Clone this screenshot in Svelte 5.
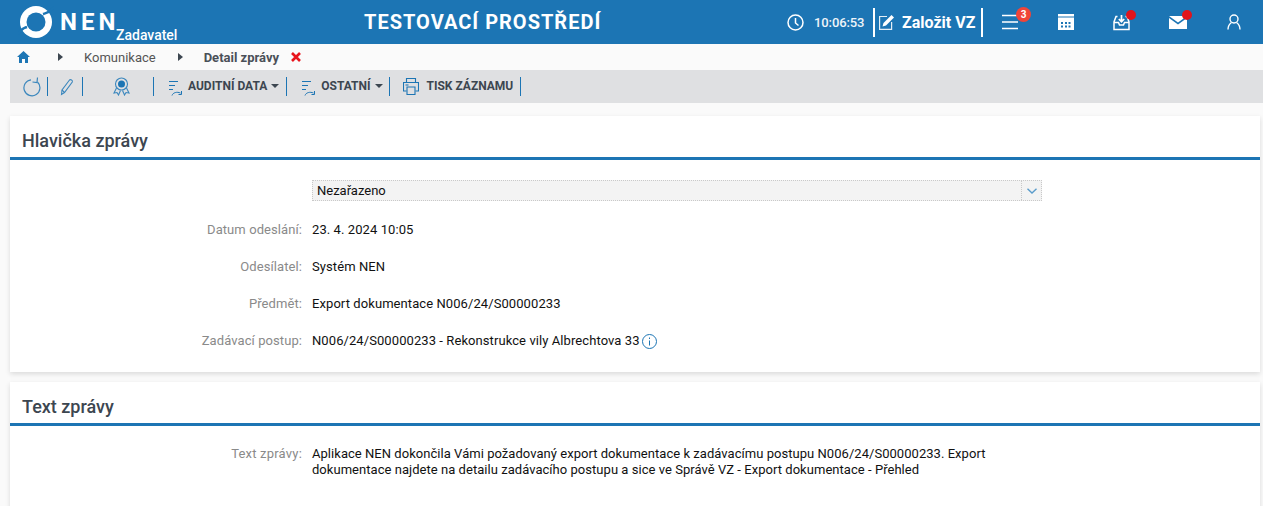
<script>
  const fields = [
    ['Datum odeslání:', '23. 4. 2024 10:05'],
    ['Odesílatel:', 'Systém NEN'],
    ['Předmět:', 'Export dokumentace N006/24/S00000233']
  ];
</script>

<div class="page">
  <header class="top">
    <div class="brand">
      <svg class="logo" width="36" height="36" viewBox="0 0 36 36">
        <circle cx="18" cy="18" r="16" fill="#fff"/>
        <circle cx="18" cy="18" r="9.500" fill="#1c75b4"/>
        <path d="M36 3C31 9 28 9 25 10" fill="none" stroke="#1c75b4" stroke-width="2.500"/>
        <path d="M0 30C4 24 6 24 9 23" fill="none" stroke="#1c75b4" stroke-width="2.500"/>
      </svg>
      <span class="nen">NEN</span>
      <span class="role">Zadavatel</span>
    </div>
    <div class="env">TESTOVACÍ PROSTŘEDÍ</div>
    <div class="tools">
      <svg class="clock" width="17" height="17" viewBox="0 0 17 17" fill="none" stroke="#fff" stroke-width="1.500"><circle cx="8.500" cy="8.500" r="7.500"/><path d="M8.500 4v5l3 2.500"/></svg>
      <span class="time">10:06:53</span>
      <div class="create">
        <svg width="16" height="16" viewBox="0 0 16 16" fill="none" stroke="#e3eef6" stroke-width="1.200"><path d="M8 2.500H.6v12.900h12V8"/><path d="M3.500 12.500l1-3.500L12.500 1l2.500 2.500-8 8z" fill="#fff" stroke="none"/></svg>
        <span>Založit VZ</span>
      </div>
      <div class="ico menu">
        <svg width="17" height="16" viewBox="0 0 17 16" fill="none" stroke="#fff" stroke-width="1.500"><path d="M0 1.500h16M0 8h16M0 14.500h16"/></svg>
        <span class="badge">3</span>
      </div>
      <div class="ico cal">
        <svg width="16" height="16" viewBox="0 0 16 16"><path fill="#fff" fill-rule="evenodd" d="M0 0h16v2.500H0zM0 3.500h16V16H0zM3 8v2h2V8zM7 8v2h2V8zM10.500 8v2h2V8zM3 11.500v2h2v-2zM7 11.500v2h2v-2zM10.500 11.500v2h2v-2z"/></svg>
      </div>
      <div class="ico tray">
        <svg width="17" height="17" viewBox="0 0 17 17" fill="none" stroke="#fff" stroke-width="1.500"><path d="M4.500 2.500H3L1 8v7.500h15V8l-2-5.500h-1.500"/><path d="M1 8.500h4.500l1 2.500h4l1-2.500H16"/><path d="M8.500 1v6.500M5.800 5l2.700 2.700L11.200 5" stroke-width="1.700"/></svg>
        <span class="dot"></span>
      </div>
      <div class="ico mail">
        <svg width="18" height="13" viewBox="0 0 18 13"><path fill="#fff" d="M0 0h18L9 6.500zM0 2l9 6.500L18 2v11H0z"/></svg>
        <span class="dot"></span>
      </div>
      <div class="ico user">
        <svg width="14" height="16" viewBox="0 0 14 16" fill="none" stroke="#fff" stroke-width="1.400"><circle cx="7" cy="5" r="4"/><path d="M1 15.500c0-4 2-6 3.500-7M13 15.500c0-4-2-6-3.500-7"/></svg>
      </div>
    </div>
  </header>

  <nav class="crumbs">
    <svg class="home" width="13" height="12" viewBox="0 0 13 12"><path fill="#1c75b4" d="M6.500 0L13 6h-2v6H8V8H5v4H2V6H0z"/></svg>
    <span class="arrow first"></span>
    <span class="link">Komunikace</span>
    <span class="arrow"></span>
    <span class="current">Detail zprávy</span>
    <svg class="close" width="10" height="10" viewBox="0 0 10 10"><path d="M1 1l8 8M9 1l-8 8" stroke="#e8141c" stroke-width="2.600"/></svg>
  </nav>

  <div class="bar">
    <svg class="b1" width="18" height="20" viewBox="0 0 18 20" fill="none" stroke="#3b87bd" stroke-width="1.200"><path d="M8 2.800A8 8 0 1 0 14.500 5"/><path d="M14.500 .5L14 5.500 9.500 5"/></svg>
    <span class="sep s1"></span>
    <svg class="b2" width="14" height="18" viewBox="0 0 14 18" fill="none" stroke="#3b87bd" stroke-width="1.100"><path d="M1.500 16.500l.5-4.500L9.500 2c1-1 3.500 .5 2.800 2L4.500 14.500z"/><path d="M2 12l2.500 2.500"/></svg>
    <span class="sep s2"></span>
    <svg class="b3" width="17" height="19" viewBox="0 0 17 19" fill="none" stroke="#3b87bd" stroke-width="1.100"><circle cx="8.500" cy="7" r="6"/><circle cx="8.500" cy="7" r="3.500" fill="#1c75b4" stroke="none"/><path d="M3.500 11L1 16l3-.5 1.500 2.500 2-4.500M13.500 11L16 16l-3-.5-1.500 2.500-2-4.500"/></svg>
    <span class="sep s3"></span>
    <svg class="list" width="14" height="18" viewBox="0 0 14 18" fill="none" stroke="#1c75b4" stroke-width="1"><path d="M1 3.500h9M1 7.500h6M1 11.500h4"/><path d="M4 17.500c1-3 5-4 8.500-2.500M13.500 13v3.500h-3"/></svg>
    <button class="act">AUDITNÍ DATA<span class="caret"></span></button>
    <span class="sep s4"></span>
    <svg class="list" width="14" height="18" viewBox="0 0 14 18" fill="none" stroke="#1c75b4" stroke-width="1"><path d="M1 3.500h9M1 7.500h6M1 11.500h4"/><path d="M4 17.500c1-3 5-4 8.500-2.500M13.500 13v3.500h-3"/></svg>
    <button class="act">OSTATNÍ<span class="caret"></span></button>
    <span class="sep s5"></span>
    <svg class="print" width="16" height="17" viewBox="0 0 16 17" fill="none" stroke="#1c75b4" stroke-width="1.100"><path d="M3.500 4.500V.5h9v4M3.500 13H.5V4.500h15V13h-3"/><path d="M4 9h8v7.500H4z"/><path d="M2.500 7h3"/></svg>
    <button class="act tisk">TISK ZÁZNAMU</button>
    <span class="sep s6"></span>
  </div>

  <section class="card head">
    <h2>Hlavička zprávy</h2>
    <div class="select-row">
      <div class="select"><span>Nezařazeno</span><i><svg width="10" height="6" viewBox="0 0 10 6" fill="none" stroke="#5a9ccb" stroke-width="1.400"><path d="M.5 .8L5 5 9.500 .8"/></svg></i></div>
    </div>
    {#each fields as [k, v]}
      <div class="row"><span class="k">{k}</span><span class="v">{v}</span></div>
    {/each}
    <div class="row">
      <span class="k">Zadávací postup:</span>
      <span class="v">N006/24/S00000233 - Rekonstrukce vily Albrechtova 33</span>
      <svg class="info" width="15" height="15" viewBox="0 0 15 15" fill="none" stroke="#1c75b4"><circle cx="7.500" cy="7.500" r="7"/><path d="M7.500 6.500v5M7.500 3.500v1.500"/></svg>
    </div>
  </section>

  <section class="card body">
    <h2>Text zprávy</h2>
    <div class="row text"><span class="k">Text zprávy:</span><span class="v">Aplikace NEN dokončila Vámi požadovaný export dokumentace k zadávacímu postupu N006/24/S00000233. Export dokumentace najdete na detailu zadávacího postupu a sice ve Správě VZ - Export dokumentace - Přehled</span></div>
  </section>
</div>

<style>
  :global(body) { margin: 0; background: #fafafa; }
  .page { font-family: Roboto, sans-serif; height: 506px; overflow: hidden; background: #fafafa; }
  .top { height: 44px; background: #1c75b4; display: flex; align-items: center; color: #fff; position: relative; }
  .brand { display: flex; position: relative; width: 200px; height: 44px; }
  .logo { margin: 4px 0 0 18px; }
  .nen { font-weight: 700; font-size: 24px; letter-spacing: 4px; margin: 7px 0 0 6px; line-height: 30px; }
  .role { font-size: 14px; font-weight: 500; position: absolute; left: 116px; top: 27px; line-height: 16px; }
  .env { position: absolute; left: 364px; top: 10px; font-weight: 700; font-size: 20px; letter-spacing: 1px; line-height: 24px; }
  .tools { margin-left: auto; display: flex; align-items: center; height: 44px; }
  .clock { margin-right: 10px; }
  .time { font-size: 13px; font-weight: 500; width: 59px; color: #eef4f9; letter-spacing: -.1px; }
  .create { display: flex; align-items: center; gap: 7px; border-left: 2px solid #fff; border-right: 2px solid #fff; height: 29px; padding-left: 4px; font-size: 16px; font-weight: 700; width: 110px; box-sizing: border-box; white-space: nowrap; }
  .ico { position: relative; display: flex; }
  .menu { margin-left: 19px; }
  .cal { margin-left: 39px; }
  .tray { margin-left: 39px; }
  .mail { margin-left: 39px; }
  .user { margin-left: 40px; margin-right: 22px; }
  .badge { position: absolute; left: 14px; top: -7px; width: 15px; height: 15px; border-radius: 50%; background: #f04438; font-size: 10px; font-weight: 700; text-align: center; line-height: 15px; }
  .dot { position: absolute; right: -5px; top: -6px; width: 10px; height: 10px; border-radius: 50%; background: #e0141c; }
  .tray .dot { right: -6px; top: -4px; }
  .crumbs { height: 26px; display: flex; align-items: center; font-size: 13px; color: #555; }
  .home { margin-left: 17px; }
  .arrow { width: 0; height: 0; border-left: 5px solid #3c4650; border-top: 4px solid transparent; border-bottom: 4px solid transparent; }
  .arrow.first { margin-left: 28px; }
  .link { margin: 0 22px 0 21px; }
  .current { font-weight: 700; margin-left: 21px; color: #4a5058; }
  .close { margin-left: 12px; }
  .bar { margin-left: 10px; height: 33px; background: #dfe0e2; display: flex; align-items: center; }
  .sep { width: 1px; height: 19px; background: #1c75b4; }
  .b1 { margin-left: 13px; }
  .s1 { margin-left: 6px; }
  .b2 { margin-left: 12px; }
  .s2 { margin-left: 8px; }
  .b3 { margin-left: 30px; }
  .s3 { margin-left: 23px; }
  .list { margin-left: 14px; }
  .act { border: 0; background: none; padding: 0 0 2px; margin: 0 0 0 6px; font: 700 12px/16px Roboto, sans-serif; color: #3c4650; display: flex; align-items: center; }
  .caret { width: 0; height: 0; border-top: 4px solid #3c4650; border-left: 4px solid transparent; border-right: 4px solid transparent; margin-left: 4px; }
  .s4 { margin-left: 7px; }
  .s5 { margin-left: 6px; }
  .print { margin-left: 13px; }
  .tisk { margin-left: 8px; }
  .s6 { margin-left: 7px; }
  .card { margin: 13px 3px 0 10px; background: #fff; box-shadow: 0 2px 5px rgba(0,0,0,.13); }
  .card.head { height: 256px; }
  .card.body { margin-top: 10px; height: 130px; }
  h2 { margin: 0; height: 41px; border-bottom: 3px solid #1c75b4; font-size: 18px; font-weight: 500; color: #3c4650; padding-left: 12px; line-height: 50px; box-sizing: content-box; }
  .select-row { padding: 20px 0 0 302px; }
  .select { width: 730px; height: 21px; box-sizing: border-box; border: 1px dotted #c9c9c9; background: #f3f3f3; display: flex; align-items: center; font-size: 13px; color: #111; padding-left: 4px; }
  .select span { flex: 1; }
  .select i { width: 19px; height: 19px; border-left: 1px dotted #c9c9c9; display: flex; align-items: center; justify-content: center; }
  .row { display: flex; font-size: 13px; line-height: 16px; margin-top: 21px; align-items: center; letter-spacing: .08px; }
  .k { width: 292px; text-align: right; color: #8a8a8a; margin-right: 10px; flex: none; }
  .v { color: #111; }
  .info { margin-left: 2px; }
  .text { align-items: flex-start; margin-top: 20px; }
  .text .k { letter-spacing: .2px; }
  .text .v { width: 700px; letter-spacing: .04px; }
</style>
